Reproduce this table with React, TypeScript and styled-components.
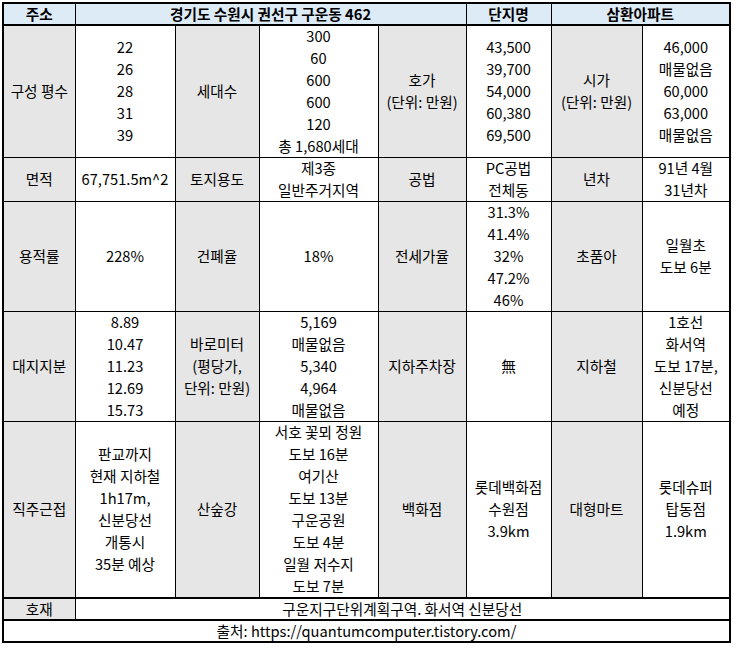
import React from "react";
import styled, { createGlobalStyle } from 'styled-components';

const GlobalStyle = createGlobalStyle`
    html, body {
        margin: 0;
        padding: 0;
        background: #ffffff;
    }
`;

const SPage = styled.div`
    padding: 2px 0 0 2px;
`;

const SSheet = styled.table`
    border-collapse: collapse;
    table-layout: fixed;
    width: 727px;
    border: 2px solid #000;
    font-family: "Noto Sans CJK KR", "Noto Sans", sans-serif;
    font-size: 14.67px;
    line-height: 22px;
    color: #000;
`;

/* $thickTop: 굵은 윗선, $compact: 한 줄짜리 행 (20px) */
const SRow = styled.tr<{ $thickTop?: boolean; $compact?: boolean }>`
    & > td {
        border-top-width: ${(p) => (p.$thickTop ? '2px' : '1px')};
        line-height: ${(p) => (p.$compact ? '20px' : '22px')};
    }

    & > td > div {
        margin-top: ${(p) => (p.$compact ? '0' : '-1px')};
    }
`;

type Tone = 'head' | 'label' | 'plain';

const toneBg: Record<Tone, string> = {
    head: '#DDEBF7',
    label: '#E7E6E6',
    plain: '#FFFFFF',
};

const SCell = styled.td<{ $tone: Tone }>`
    border: 1px solid #000;
    padding: 0 1px;
    text-align: center;
    vertical-align: middle;
    white-space: nowrap;
    overflow: visible;
    background: ${(p) => toneBg[p.$tone]};
    font-weight: ${(p) => (p.$tone === 'head' ? 700 : 400)};
`;

const SStack = styled.div`
    display: block;
`;

const SLine = styled.span`
    display: block;
`;

interface CellProps {
    tone?: Tone;
    span?: number;
    lines: string[];
}

function Cell({ tone = 'plain', span, lines }: CellProps) {
    return (
        <SCell $tone={tone} colSpan={span}>
            <SStack>
                {lines.map((l, i) => <SLine key={i}>{l}</SLine>)}
            </SStack>
        </SCell>
    );
}

const colWidths = [72, 100, 84, 119, 88, 85, 91, 88];

function App() {
    return (
        <SPage>
            <GlobalStyle />
            <SSheet>
                <colgroup>
                    {colWidths.map((w, i) => <col key={i} style={{ width: w }} />)}
                </colgroup>
                <tbody>
                    {/* 헤더 */}
                    <SRow $compact>
                        <Cell tone="head" lines={['주소']} />
                        <Cell tone="head" span={4} lines={['경기도 수원시 권선구 구운동 462']} />
                        <Cell tone="head" lines={['단지명']} />
                        <Cell tone="head" span={2} lines={['삼환아파트']} />
                    </SRow>

                    {/* 평수 / 세대수 / 가격 */}
                    <SRow $thickTop>
                        <Cell tone="label" lines={['구성 평수']} />
                        <Cell lines={['22', '26', '28', '31', '39']} />
                        <Cell tone="label" lines={['세대수']} />
                        <Cell lines={['300', '60', '600', '600', '120', '총 1,680세대']} />
                        <Cell tone="label" lines={['호가', '(단위: 만원)']} />
                        <Cell lines={['43,500', '39,700', '54,000', '60,380', '69,500']} />
                        <Cell tone="label" lines={['시가', '(단위: 만원)']} />
                        <Cell lines={['46,000', '매물없음', '60,000', '63,000', '매물없음']} />
                    </SRow>

                    <SRow>
                        <Cell tone="label" lines={['면적']} />
                        <Cell lines={['67,751.5m^2']} />
                        <Cell tone="label" lines={['토지용도']} />
                        <Cell lines={['제3종', '일반주거지역']} />
                        <Cell tone="label" lines={['공법']} />
                        <Cell lines={['PC공법', '전체동']} />
                        <Cell tone="label" lines={['년차']} />
                        <Cell lines={['91년 4월', '31년차']} />
                    </SRow>

                    <SRow>
                        <Cell tone="label" lines={['용적률']} />
                        <Cell lines={['228%']} />
                        <Cell tone="label" lines={['건폐율']} />
                        <Cell lines={['18%']} />
                        <Cell tone="label" lines={['전세가율']} />
                        <Cell lines={['31.3%', '41.4%', '32%', '47.2%', '46%']} />
                        <Cell tone="label" lines={['초품아']} />
                        <Cell lines={['일월초', '도보 6분']} />
                    </SRow>

                    <SRow>
                        <Cell tone="label" lines={['대지지분']} />
                        <Cell lines={['8.89', '10.47', '11.23', '12.69', '15.73']} />
                        <Cell tone="label" lines={['바로미터', '(평당가,', '단위: 만원)']} />
                        <Cell lines={['5,169', '매물없음', '5,340', '4,964', '매물없음']} />
                        <Cell tone="label" lines={['지하주차장']} />
                        <Cell lines={['無']} />
                        <Cell tone="label" lines={['지하철']} />
                        <Cell lines={['1호선', '화서역', '도보 17분,', '신분당선', '예정']} />
                    </SRow>

                    <SRow>
                        <Cell tone="label" lines={['직주근접']} />
                        <Cell lines={['판교까지', '현재 지하철', '1h17m,', '신분당선', '개통시', '35분 예상']} />
                        <Cell tone="label" lines={['산숲강']} />
                        <Cell lines={['서호 꽃뫼 정원', '도보 16분', '여기산', '도보 13분', '구운공원', '도보 4분', '일월 저수지', '도보 7분']} />
                        <Cell tone="label" lines={['백화점']} />
                        <Cell lines={['롯데백화점', '수원점', '3.9km']} />
                        <Cell tone="label" lines={['대형마트']} />
                        <Cell lines={['롯데슈퍼', '탑동점', '1.9km']} />
                    </SRow>

                    {/* 호재 */}
                    <SRow $thickTop $compact>
                        <Cell tone="label" lines={['호재']} />
                        <Cell span={7} lines={['구운지구단위계획구역. 화서역 신분당선']} />
                    </SRow>

                    {/* 출처 */}
                    <SRow $thickTop $compact>
                        <Cell span={8} lines={['출처: https://quantumcomputer.tistory.com/']} />
                    </SRow>
                </tbody>
            </SSheet>
        </SPage>
    );
}

export default App;
